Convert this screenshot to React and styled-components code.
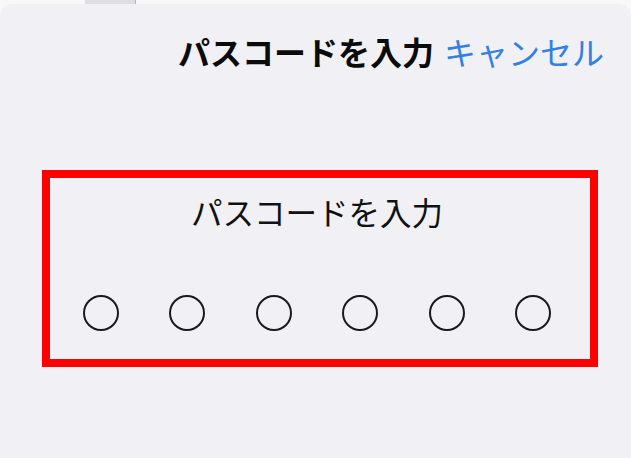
import React from "react";
import styled, { createGlobalStyle } from "styled-components";

// --- STYLES ---
const GlobalStyle = createGlobalStyle`
  html, body {
    margin: 0;
    padding: 0;
    background: #f8f8f9;
  }
  body {
    font-family: "Noto Sans CJK JP", "Noto Sans", sans-serif;
  }
`;

const Page = styled.div`
  width: 631px;
  height: 458px;
  overflow: hidden;
  display: flex;
  flex-direction: column;
  background: #f8f8f9;
`;

const TopStrip = styled.div`
  height: 4px;
  display: flex;
  flex-shrink: 0;
`;

const StripTab = styled.div`
  margin-left: 85px;
  width: 50px;
  height: 4px;
  background: #dedde2;
  border-right: 1px solid #b8b8bc;
`;

const Sheet = styled.div`
  flex: 1;
  background: #f1f0f5;
  border-radius: 12px 12px 0 0;
  display: flex;
  flex-direction: column;
`;

const Header = styled.div`
  display: flex;
  justify-content: flex-end;
  align-items: center;
  gap: 10px;
  padding: 24px 27px 0 0;
  height: 46px;
  line-height: 46px;
  font-size: 32px;
`;

const Title = styled.span`
  font-weight: 700;
  color: #0b0b0b;
`;

const Cancel = styled.span`
  font-weight: 400;
  color: #3181e3;
`;

const HighlightBox = styled.div`
  margin: 96px 33px 0 42px;
  border: 8px solid #fd0000;
  padding: 11px 6px 28px 0;
  display: flex;
  flex-direction: column;
  align-items: center;
`;

const Prompt = styled.div`
  font-size: 31.5px;
  line-height: 44px;
  font-weight: 400;
  color: #111;
`;

const Dots = styled.div`
  display: flex;
  gap: 50.4px;
  margin-top: 62px;
`;

const Dot = styled.div`
  width: 36px;
  height: 36px;
  box-sizing: border-box;
  border-radius: 50%;
  border: 2.4px solid ${(p) => (p.filled ? "#111" : "#1a1a1a")};
  background: ${(p) => (p.filled ? "#111" : "transparent")};
`;

const App = () => {
  const digits = [0, 0, 0, 0, 0, 0];
  return (
    <Page>
      <GlobalStyle />
      <TopStrip>
        <StripTab />
      </TopStrip>
      <Sheet>
        <Header>
          <Title>パスコードを入力</Title>
          <Cancel>キャンセル</Cancel>
        </Header>
        <HighlightBox>
          <Prompt>パスコードを入力</Prompt>
          <Dots>
            {digits.map((d, i) => (
              <Dot key={i} filled={d === 1} />
            ))}
          </Dots>
        </HighlightBox>
      </Sheet>
    </Page>
  );
};

export default App;
